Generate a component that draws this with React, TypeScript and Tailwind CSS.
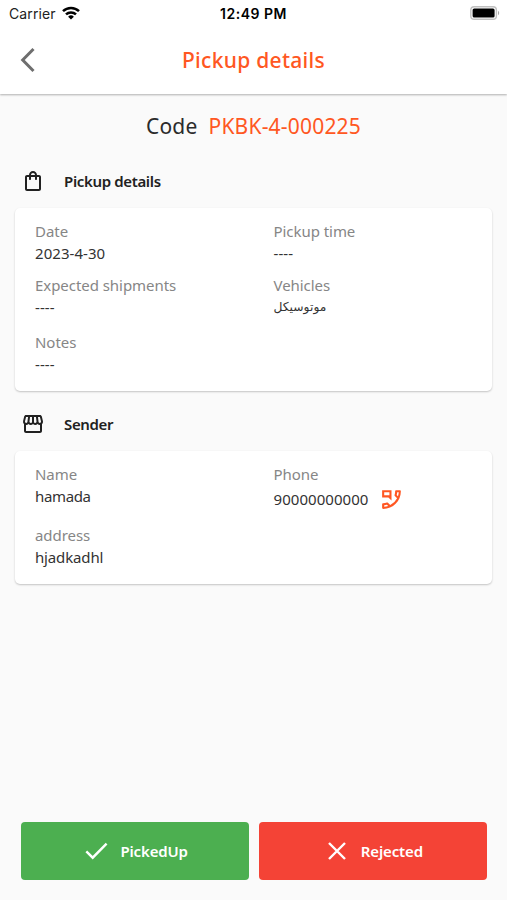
import type { ReactNode } from "react";
import { MdOutlinePermPhoneMsg, MdOutlineShoppingBag, MdOutlineStorefront } from "react-icons/md";

function StatusBar() {
  return (
    <div className="flex h-[27px] items-center justify-between pl-[9px] pr-[7px] font-['Inter',sans-serif] text-black">
      <div className="flex w-[148px] items-center gap-[6px]">
        <span className="text-[14px] tracking-[0.1px] text-[#222]">Carrier</span>
        <svg className="-mt-px" width="18" height="14" viewBox="0 0 18 14" fill="none" stroke="black" strokeWidth="2.5">
          <path d="M1 5.2a11.5 11.5 0 0 1 16 0" />
          <path d="M4 8.4a7.2 7.2 0 0 1 10 0" />
          <path d="M9 13.6 6.1 10.7a4.2 4.2 0 0 1 5.8 0Z" fill="black" stroke="none" />
        </svg>
      </div>
      <span className="text-[14px] font-semibold tracking-[0.5px]">12:49 PM</span>
      <div className="flex w-[150px] justify-end">
        <svg className="-mt-px" width="30" height="14" viewBox="0 0 30 14">
          <rect x="0.8" y="0.7" width="25.6" height="12.6" rx="3.4" fill="white" stroke="#c0c0c0" strokeWidth="1.4" />
          <rect x="2.6" y="2.5" width="22" height="9" rx="1.6" fill="black" />
          <path d="M28 4.8c1.6.8 1.6 3.6 0 4.4Z" fill="#a8a8a8" />
        </svg>
      </div>
    </div>
  );
}

function Field({ label, children }: { label: string; children: ReactNode }) {
  return (
    <div>
      <p className="text-[15px] leading-[22px] tracking-[-0.05px] text-[#868686]">{label}</p>
      <div className="text-[15px] leading-[22px] tracking-[0.05px] text-[#333]">{children}</div>
    </div>
  );
}

function SectionTitle({ icon, title }: { icon: ReactNode; title: string }) {
  return (
    <div className="flex items-center gap-[19px] pl-[21px] text-[#212121]">
      {icon}
      <h2 className="text-[15px] font-semibold leading-6 tracking-[-0.35px]">{title}</h2>
    </div>
  );
}

const cardClass =
  "mx-[15px] grid grid-cols-[238.5px_1fr] rounded-[5px] bg-white px-5 shadow-[0_1px_2px_rgba(0,0,0,0.22)]";

export default function App() {
  return (
    <div className="flex h-[900px] w-[507px] flex-col bg-[#fafafa] font-['Noto_Sans','DejaVu_Sans',sans-serif]">
      <header className="h-[94px] bg-white shadow-[0_1px_2px_rgba(0,0,0,0.3)]">
        <StatusBar />
        <div className="grid h-[66px] grid-cols-[60px_1fr_60px] items-center">
          <svg className="ml-5" width="16" height="26" viewBox="0 0 16 26" fill="none" stroke="#6e6e6e" strokeWidth="3">
            <path d="M13.5 2 2.7 13l10.8 11" />
          </svg>
          <h1 className="text-center text-[21px] font-medium leading-7 tracking-[0.3px] text-[#ff5722]">
            Pickup details
          </h1>
        </div>
      </header>

      <div className="mt-[17px] flex justify-center gap-[11px] text-[21px] leading-[30px] tracking-[0.2px]">
        <span className="text-[#2b2b2b]">Code</span>
        <span className="text-[#ff5722]">PKBK-4-000225</span>
      </div>

      <div className="mt-7">
        <SectionTitle icon={<MdOutlineShoppingBag className="size-6" />} title="Pickup details" />
      </div>
      <section className={`${cardClass} mt-[15px] h-[183px] content-start pt-[12px]`}>
        <Field label="Date">2023-4-30</Field>
        <Field label="Pickup time">----</Field>
        <div className="mt-[10px]">
          <Field label="Expected shipments">----</Field>
        </div>
        <div className="mt-[10px]">
          <Field label="Vehicles">
            <p lang="ar" className="h-[22px] text-[12.3px] leading-[22px] tracking-normal">
              موتوسيكل
            </p>
          </Field>
        </div>
        <div className="mt-[13px]">
          <Field label="Notes">----</Field>
        </div>
      </section>

      <div className="mt-[21px]">
        <SectionTitle icon={<MdOutlineStorefront className="size-6" />} title="Sender" />
      </div>
      <section className={`${cardClass} mt-[15px] h-[133px] content-start pt-[12px]`}>
        <Field label="Name">
          <span className="tracking-[-0.35px]">hamada</span>
        </Field>
        <Field label="Phone">
          <div className="flex h-[28px] items-center gap-[11px]">
            <span>90000000000</span>
            <MdOutlinePermPhoneMsg className="size-[25px] -scale-x-100 text-[#ff5722]" />
          </div>
        </Field>
        <div className="mt-[11px]">
          <Field label="address">
            <span className="tracking-[-0.15px]">hjadkadhl</span>
          </Field>
        </div>
      </section>

      <footer className="mb-5 ml-[20.5px] mr-5 mt-auto grid h-[58px] grid-cols-2 gap-[10px] text-[15px] font-semibold tracking-[-0.15px] text-white">
        <button className="flex items-center justify-center gap-[12px] rounded-[4px] bg-[#4caf50] pl-[4px]">
          <svg width="23" height="18" viewBox="0 0 23 18" fill="none" stroke="white" strokeWidth="2.4">
            <path d="m1.3 9.4 6.4 6.3L21.6 1.6" />
          </svg>
          PickedUp
        </button>
        <button className="flex items-center justify-center gap-[15px] rounded-[4px] bg-[#f44336] pl-[5px]">
          <svg width="18" height="18" viewBox="0 0 18 18" fill="none" stroke="white" strokeWidth="2.4">
            <path d="m1 1 16 16M17 1 1 17" />
          </svg>
          Rejected
        </button>
      </footer>
    </div>
  );
}
